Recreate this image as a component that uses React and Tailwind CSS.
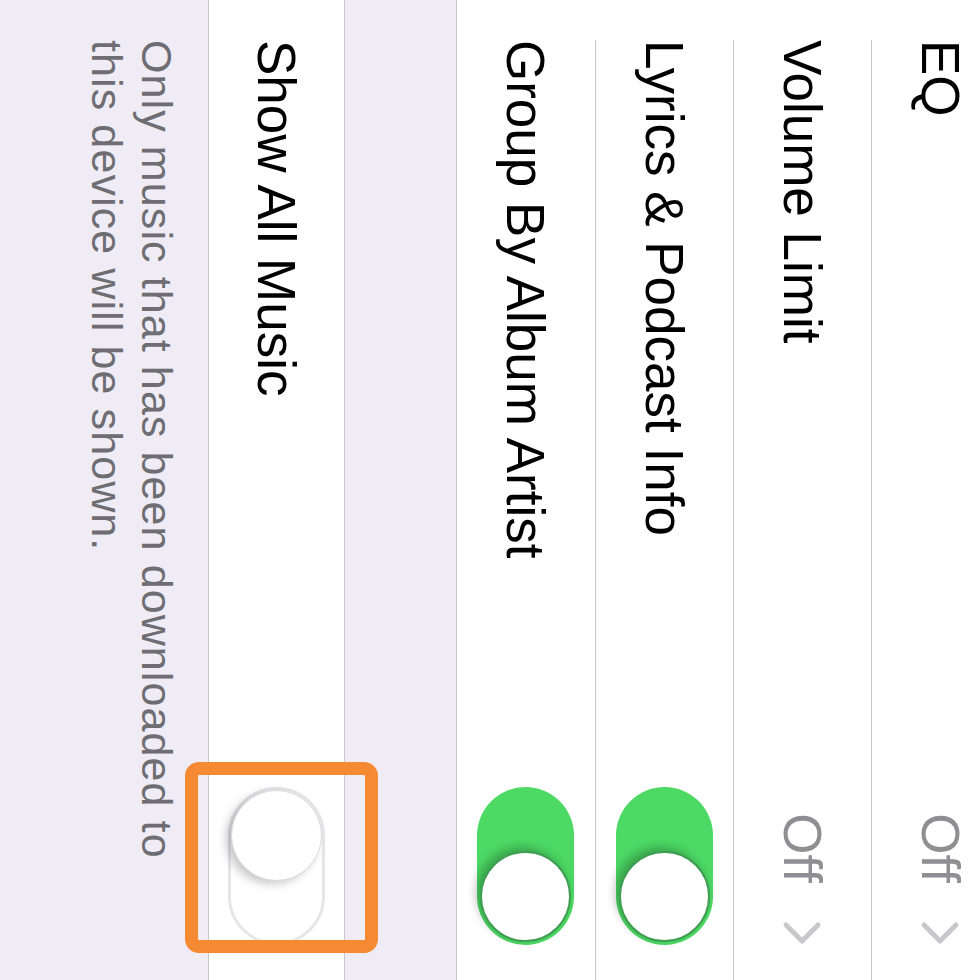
const Chevron = () => (
  <svg width="24" height="40" viewBox="0 0 24 40" className="ml-[38px]">
    <path d="M4 4 L20 20 L4 36" fill="none" stroke="#c7c7cc" strokeWidth="5" strokeLinecap="round" strokeLinejoin="round" />
  </svg>
);

const Toggle = ({ on }) => (
  <div
    className={`relative w-[158px] h-[97px] rounded-full ${
      on ? "bg-[#4cd964]" : "bg-white border-[3px] border-[#e6e6e9]"
    }`}
  >
    <div
      className={`absolute w-[91px] h-[91px] rounded-full bg-white ${
        on
          ? "right-[3px] top-[3px] border-[2px] border-[#3f9e52] shadow-[-4px_4px_10px_rgba(0,0,0,0.25)]"
          : "left-0 top-0 border border-[#d9d9dd] shadow-[3px_5px_10px_rgba(0,0,0,0.22)]"
      }`}
    />
  </div>
);

const Row = ({ label, children, last, short }) => (
  <div className={`${short ? "h-[135px]" : "h-[138px]"} pl-[40px] bg-white`}>
    <div
      className={`h-full flex items-center justify-between pr-[35px] ${
        last ? "" : "border-b border-[#c8c7cc]"
      }`}
    >
      <span className="text-[53px] text-black leading-none">{label}</span>
      {children}
    </div>
  </div>
);

const Value = ({ text }) => (
  <div className="flex items-center">
    <span className="text-[53px] text-[#8e8e93] leading-none">{text}</span>
    <Chevron />
  </div>
);

export default function App() {
  return (
    <div className="w-[980px] h-[980px] overflow-hidden bg-[#efecf6]">
      <div
        className="relative flow-root overflow-hidden w-[980px] h-[980px] rotate-90 bg-[#efecf6]"
        style={{ fontFamily: '"Liberation Sans", Arial, sans-serif' }}
      >
        {/* first group, EQ row runs off the edge */}
        <div className="-mt-[29px] bg-white border-b border-[#c8c7cc]">
          <Row label="EQ">
            <Value text="Off" />
          </Row>
          <Row label="Volume Limit">
            <Value text="Off" />
          </Row>
          <Row label="Lyrics & Podcast Info">
            <Toggle on />
          </Row>
          <Row label="Group By Album Artist" last>
            <Toggle on />
          </Row>
        </div>

        <div className="h-[111px]" />

        <div className="border-t border-b border-[#c8c7cc]">
          <Row label="Show All Music" last short>
            <Toggle on={false} />
          </Row>
        </div>

        <div className="pt-[26px] pl-[40px] pr-[40px] text-[43px] leading-[50px] tracking-[1.1px] text-[#6d6d72]">
          <p>Only music that has been downloaded to</p>
          <p>this device will be shown.</p>
        </div>

        {/* highlight box */}
        <div className="absolute left-[762px] top-[602px] w-[191px] h-[193px] border-[13px] border-[#f58a33] rounded-[14px]" />
      </div>
    </div>
  );
}
